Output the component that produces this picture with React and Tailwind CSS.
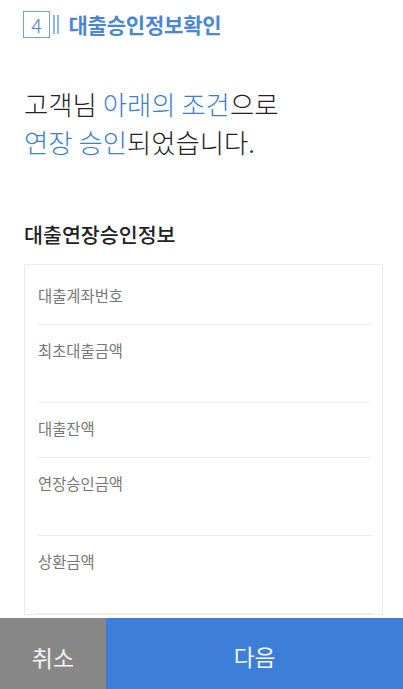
import React from 'react';

const rows = [
  { label: '대출계좌번호', value: false },
  { label: '최초대출금액', value: true },
  { label: '대출잔액', value: false },
  { label: '연장승인금액', value: true },
  { label: '상환금액', value: true },
];

const App = () => {
  return (
    <div className="flex flex-col h-[689px] bg-white overflow-hidden font-['Noto_Sans_CJK_KR','Noto_Sans',sans-serif]">
      <div className="flex-1 overflow-hidden">
        {/* Step header */}
        <div className="flex items-center pl-[23px] pt-[11px]">
          <div className="w-[27px] h-[27px] border-[1.5px] border-[#6fa2e2] flex items-center justify-center text-[20px] leading-none font-light text-[#4a86d6]">
            4
          </div>
          <div className="ml-[3px] h-[19px] w-[1.5px] bg-[#8fb6ea]" />
          <div className="ml-[2.5px] h-[19px] w-[1.5px] bg-[#8fb6ea]" />
          <h1 className="ml-[10px] text-[21px] leading-[27px] font-bold text-[#4a86d6] tracking-[-0.2px]">
            대출승인정보확인
          </h1>
        </div>

        {/* Headline */}
        <div className="mt-[47px] px-[24px] text-[26.4px] font-light text-[#222]">
          <div className="h-[38px] leading-[38px] whitespace-nowrap">
            고객님 <span className="text-[#3d7fd3]">아래의 조건</span>으로
          </div>
          <div className="h-[38px] leading-[38px] whitespace-nowrap">
            <span className="text-[#3d7fd3]">연장 승인</span>되었습니다.
          </div>
        </div>

        {/* Section */}
        <h2 className="mt-[59px] px-[24px] text-[20.6px] leading-[28px] font-medium text-[#222]">
          대출연장승인정보
        </h2>

        <div className="mt-[16px] ml-[24px] mr-[20px] border border-[#ececec] pl-[13px] pr-[11px] pt-[5px]">
          {rows.map((row) => (
            <div key={row.label} className="border-b border-[#ececec] pt-[15px] pb-[19px]">
              <div className="text-[15.4px] leading-[20px] text-[#777]">{row.label}</div>
              {row.value && <div className="h-[23px]" />}
            </div>
          ))}
        </div>
      </div>

      {/* Bottom buttons */}
      <div className="flex h-[71px] shrink-0">
        <button className="w-[106px] pt-[8px] bg-[#878787] text-[#f2f2f2] text-[23px]">취소</button>
        <button className="flex-1 pt-[8px] bg-[#3d7ed8] text-[#f4f7fc] text-[22.7px]">다음</button>
      </div>
    </div>
  );
};

export default App;
